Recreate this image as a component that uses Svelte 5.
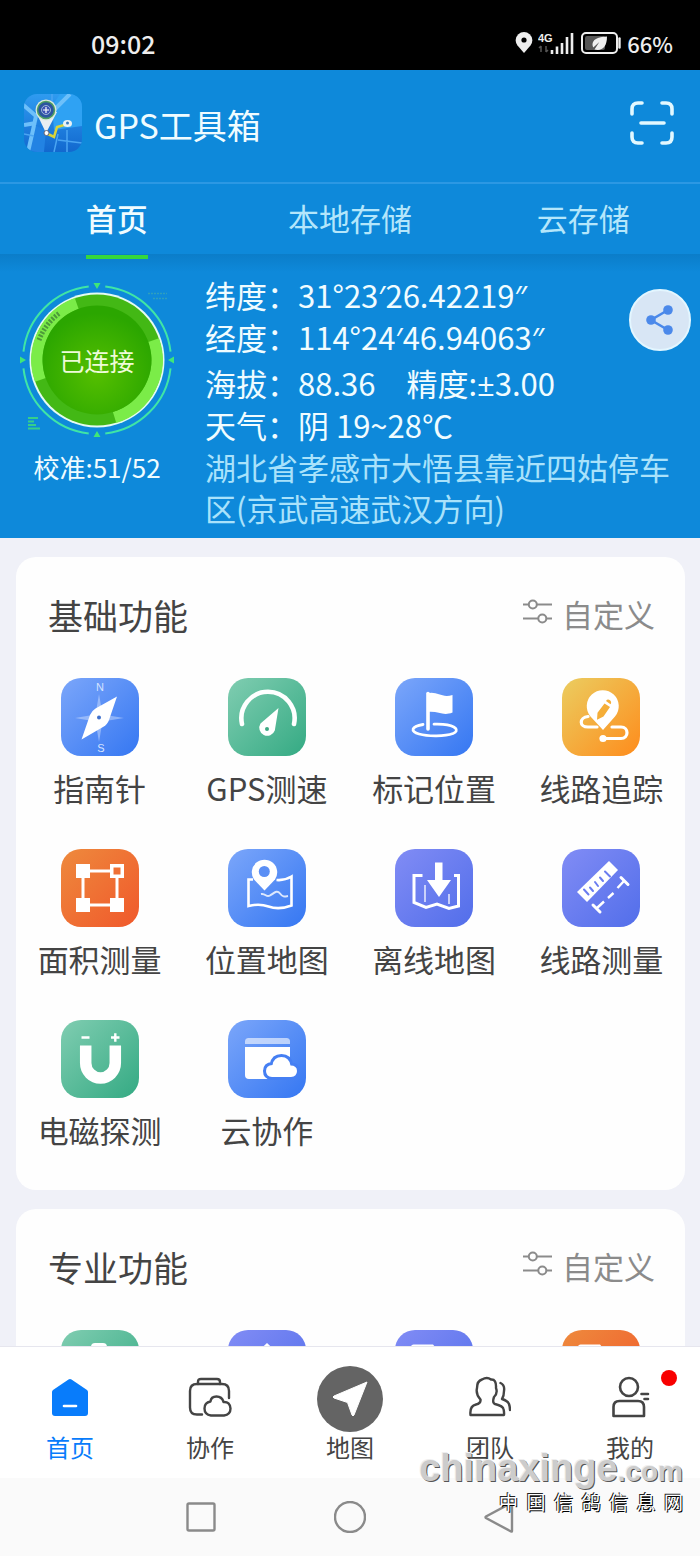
<script lang="ts">
  type Tool = { icon: string; tone: string; label?: string };

  const tabs = ['首页', '本地存储', '云存储'];
  let activeTab = $state('首页');
  let activeNav = $state('首页');

  const basicTools: Tool[] = [
    { icon: 'compass', tone: 'blue', label: '指南针' },
    { icon: 'speed', tone: 'green', label: 'GPS测速' },
    { icon: 'flag', tone: 'blue', label: '标记位置' },
    { icon: 'track', tone: 'yellow', label: '线路追踪' },
    { icon: 'area', tone: 'orange', label: '面积测量' },
    { icon: 'map', tone: 'blue', label: '位置地图' },
    { icon: 'offline', tone: 'purple', label: '离线地图' },
    { icon: 'ruler', tone: 'purple', label: '线路测量' },
    { icon: 'magnet', tone: 'green', label: '电磁探测' },
    { icon: 'cloud', tone: 'blue', label: '云协作' },
  ];

  const proTools: Tool[] = [
    { icon: 'bag', tone: 'green' },
    { icon: 'peak', tone: 'purple' },
    { icon: 'sheet', tone: 'purple' },
    { icon: 'sheet', tone: 'orange' },
  ];

  const navItems = ['首页', '协作', '地图', '团队', '我的'];
</script>

{#snippet toolIcon(name: string)}
  <svg viewBox="0 0 78 78" fill="none" aria-hidden="true">
    {#if name === 'compass'}
      <path d="M38 16l3.500 20.500L63 40l-21.500 3.500L38 64l-3.500-20.500L14 40l20.500-3.500z" fill="#fff" opacity=".35" />
      <path d="M56 18.500L48 42Q46.500 46.500 42 49L20.500 61.500L29 37Q30.500 33 34.500 30.500z" fill="#fff" />
      <circle cx="38" cy="39.500" r="2" fill="#3f70cc" />
      <text x="39" y="13" class="mark">N</text>
      <text x="40" y="74" class="mark">S</text>
    {:else if name === 'speed'}
      <path d="M14 46a26.600 26.600 0 1 1 52 0" stroke="#fff" stroke-width="4.600" stroke-linecap="round" />
      <path d="M50.500 30L46.800 52.500A8 8 0 1 1 32.500 45.500z" fill="#fff" />
      <circle cx="39" cy="51" r="2" fill="#3da983" />
    {:else if name === 'flag'}
      <path d="M33 15.500V51" stroke="#fff" stroke-width="3.600" stroke-linecap="round" />
      <path d="M32 15.500c10-3 14 5 25.500 1.500V34.500c-10 4-14-2-25.500-.5z" fill="#fff" />
      <path d="M28 46.500c-12 2-13 7-4 9.500c9 2.500 26 2.500 34-.5c7-3 3-8-10-9.200c-3-.3-6-.3-9-.2" stroke="#fff" stroke-width="2.800" stroke-linecap="round" />
    {:else if name === 'track'}
      <path d="M26 38.500c-9 1-9 10.500 0 10.500h9" stroke="#fff" stroke-width="3.200" stroke-linecap="round" />
      <path d="M50 49h9c8 0 8 11.500 0 11.500H41" stroke="#fff" stroke-width="3.200" stroke-linecap="round" />
      <circle cx="41" cy="60.500" r="3.600" fill="#fff" />
      <path d="M41 52L28.500 38.500A16 16 0 1 1 53 38.500z" fill="#fff" />
      <path d="M42.500 25.500l5.500 3.600l-6.500 9.400l-6.500 3.200l.5-7zM44 23q1.500-2.500 4-.8q2 1.700.5 4z" fill="#f5ae38" />
    {:else if name === 'area'}
      <path d="M22 22H56V56H22z" stroke="#fff" stroke-width="3" />
      <path d="M15 15h14v14H15zM15 49h14v14H15zM49 49h14v14H49zM49 15h14v14H49z" fill="#fff" />
      <path d="M52.500 18.500h7v7h-7z" fill="#ef7035" />
    {:else if name === 'map'}
      <path d="M25 30.500h-4.500V57c8-2 13-2 20 .5s15 2 23-1V27.500c-5 3-10 4-15 3.500" stroke="#fff" stroke-width="2.600" />
      <path d="M33 45c5-1 5 4 9 1.500s7-6 10-2s5 3 8 2.500" stroke="#fff" stroke-width="2" opacity=".8" />
      <path d="M36.500 41.500L26 30.500A12.700 12.700 0 1 1 47 30.500z" fill="#fff" />
      <circle cx="36.300" cy="22.500" r="5.500" fill="#5b8ff5" />
    {:else if name === 'offline'}
      <path d="M27.500 26.500h-8.500V53.500L31 58.500l11-3.500L54 59.500l9.500-2.500V26.500h-4.500" stroke="#fff" stroke-width="3" />
      <path d="M30 36V53M54 45V55" stroke="#fff" stroke-width="1.600" opacity=".8" />
      <path d="M40 13.500h7.500V31H56L44 48L32 31h8z" fill="#fff" />
    {:else if name === 'ruler'}
      <path d="M47 12L56 21L25 53L15 43z" fill="#fff" />
      <path d="M22 40.500l4.500 5M28 38.500l3 3.500M33 33l3 4M38 28.500l3 3.500M43 22.500l5 5" stroke="#6a7cf0" stroke-width="2" stroke-linecap="round" />
      <path d="M35 59l7-6.500M46 49l5.500-5M55.500 39L62 32" stroke="#fff" stroke-width="2.400" />
      <path d="M31 56l7 7M59 28.500l7 7" stroke="#fff" stroke-width="3" stroke-linecap="round" />
    {:else if name === 'magnet'}
      <path d="M24.700 25.500V43a14.800 15 0 0 0 29.600 0V25.500" stroke="#fff" stroke-width="11.500" />
      <path d="M20.500 17.500h8M50 17.500h8.500M54.300 13.300v8.500" stroke="#fff" stroke-width="2.400" />
    {:else if name === 'cloud'}
      <path d="M17 24v-2.500q0-3.500 3.500-3.500h38q3.500 0 3.500 3.500V24z" fill="#fff" opacity=".6" />
      <path d="M17 27H62V59H21q-4 0-4-4z" fill="#fff" />
      <path d="M44 57q-6-.5-6-6t6.500-6q1.500-8 9-8t9 8.500q6.500 0 6.500 5.500t-6 6z" fill="#fff" stroke="#457ff3" stroke-width="6" />
      <path d="M44 57q-6-.5-6-6t6.500-6q1.500-8 9-8t9 8.500q6.500 0 6.500 5.500t-6 6z" fill="#fff" />
    {:else if name === 'bag'}
      <path d="M30 24v-7q0-4 4-4h8q4 0 4 4v7z" fill="#fff" />
    {:else if name === 'peak'}
      <path d="M39 13L53 26H25z" fill="#fff" />
    {:else if name === 'sheet'}
      <path d="M16 24v-7q0-2.500 2.500-2.500H38L46 24z" fill="#fff" />
    {/if}
  </svg>
{/snippet}

{#snippet section(title: string, tools: Tool[])}
  <section class="card">
    <div class="card-head">
      <h2>{title}</h2>
      <button class="custom">
        <svg width="30" height="26" viewBox="0 0 30 26" fill="none" stroke="#8b8b8b" stroke-width="2" aria-hidden="true">
          <path d="M0 5.500h5.500M14 5.500h15M0 19.500h15M23.500 19.500h5.500" />
          <circle cx="9.800" cy="5.500" r="4" />
          <circle cx="19.300" cy="19.500" r="4" />
        </svg>
        自定义
      </button>
    </div>
    <div class="grid">
      {#each tools as tool}
        <button class="tool">
          <span class="tile {tool.tone}">{@render toolIcon(tool.icon)}</span>
          {#if tool.label}<span class="tool-label">{tool.label}</span>{/if}
        </button>
      {/each}
    </div>
  </section>
{/snippet}

<div class="phone">
  <div class="status">
    <span class="clock">09:02</span>
    <div class="status-right">
      <svg width="18" height="22" viewBox="0 0 18 22" aria-hidden="true">
        <path d="M9 21L2.500 13.500A8.300 8.300 0 1 1 15.500 13.500z" fill="#eee" />
        <circle cx="9" cy="8" r="2.600" fill="#000" />
      </svg>
      <svg width="37" height="24" viewBox="0 0 37 24" aria-hidden="true">
        <text x="0" y="11" class="net">4G</text>
        <path d="M3 15v6M1 17l2-2M8 15v6M8 21l2-2" stroke="#555" stroke-width="1.500" />
        <path d="M14 19v4M19 15.500V23M24 12V23M29 6V23M34 2V23" stroke="#eee" stroke-width="2.600" />
      </svg>
      <svg width="42" height="24" viewBox="0 0 42 24" aria-hidden="true">
        <rect x="2" y="2" width="35" height="20" rx="4" fill="none" stroke="#eee" stroke-width="2" />
        <rect x="5" y="5" width="20" height="14" rx="2" fill="#555" />
        <path d="M39.500 7.500v9" stroke="#eee" stroke-width="2.400" stroke-linecap="round" />
        <path d="M27 5.500C17 6 12.500 9 12.500 13.500q0 1.500.8 3l6-5.500l-4.800 7.500C22 20.500 27 16 27 5.500z" fill="#eee" />
      </svg>
      <span class="percent">66%</span>
    </div>
  </div>

  <header>
    <div class="bar">
      <svg class="logo" viewBox="0 0 58 58" fill="none" aria-hidden="true">
        <defs>
          <clipPath id="logo-clip"><rect width="58" height="58" rx="13" /></clipPath>
          <linearGradient id="logo-bg" x2="0" y2="1">
            <stop offset="0" stop-color="#2f9bf0" />
            <stop offset="1" stop-color="#1268cf" />
          </linearGradient>
        </defs>
        <g clip-path="url(#logo-clip)">
          <rect width="58" height="58" fill="url(#logo-bg)" />
          <path d="M36 0L28 12L30 36L58 32V0z" fill="#2fa2f3" />
          <path d="M10 31L22 36L20 58H6z" fill="#2283e3" />
          <path d="M-2 10L12 22L9 36L4 58M0 31l12-2M46 0L30 16" stroke="#6dc0fa" stroke-width="4" />
          <path d="M28 0v8M34 40L30 58M43 36V58M34 46l24 3M0 40l10 2" stroke="#4aa5f2" stroke-width="1.500" />
          <path d="M24 40l6 3l3-10l11-3" stroke="#d9d43a" stroke-width="2.600" />
          <ellipse cx="43.500" cy="29.500" rx="4.500" ry="3.500" fill="#e8f1f4" />
          <circle cx="43.500" cy="29" r="1.500" fill="#3b7cc0" />
          <path d="M12 18L22 39L33 18z" fill="#e9eef2" />
          <circle cx="22" cy="16" r="10.500" fill="#dbe8dc" />
          <circle cx="22" cy="16" r="8.500" fill="#2c559f" stroke="#4d9f60" stroke-width="1.500" />
          <circle cx="22" cy="16" r="4.500" fill="#3c53b4" stroke="#9db4d8" stroke-width="1" />
          <path d="M22 13v6M19 16h6" stroke="#fff" stroke-width="1.200" />
          <circle cx="22.500" cy="39" r="2.500" fill="#fff" stroke="#667" />
        </g>
      </svg>
      <h1>GPS工具箱</h1>
      <button class="scan" aria-label="扫一扫">
        <svg width="44" height="44" viewBox="0 0 44 44" fill="none" stroke="#e2f8ff" stroke-width="3.600" stroke-linecap="round" aria-hidden="true">
          <path d="M2 13V8q0-6 6-6h4M32 2h4q6 0 6 6v5M42 32v4q0 6-6 6h-4M12 42H8q-6 0-6-6v-4M11 22h23" />
        </svg>
      </button>
    </div>

    <div class="tabs" role="tablist">
      {#each tabs as tab}
        <button role="tab" aria-selected={activeTab === tab} class:active={activeTab === tab} onclick={() => (activeTab = tab)}>
          {tab}
        </button>
      {/each}
    </div>

    <div class="panel">
      <div class="signal">
        <button class="dial">
          <svg viewBox="0 0 160 160" fill="none" aria-hidden="true">
            <defs>
              <radialGradient id="dial-core" cx=".5" cy=".62" r=".55">
                <stop offset="0" stop-color="#55bf00" />
                <stop offset="1" stop-color="#2ba600" />
              </radialGradient>
            </defs>
            <circle cx="80" cy="80" r="74" stroke="#3fe5a6" stroke-width="2" pathLength="360" stroke-dasharray="77 13" stroke-dashoffset="-6.500" />
            <path d="M76.500 3h7L80 9zM76.500 157h7L80 151zM3 76.500v7L9 80zM157 76.500v7L151 80z" fill="#40e678" />
            <circle cx="80" cy="80" r="67.500" fill="#e5fbf2" />
            <circle cx="80" cy="80" r="65.500" fill="#43b815" />
            <path d="M59.700 23.500A60 60 0 0 0 23.400 99.900M136.600 60.100A60 60 0 0 1 97.600 137.400" stroke="#7bec48" stroke-width="11.500" />
            <path d="M22 60A61 61 0 0 1 42.500 33" stroke="#4c9a3a" stroke-width="5" stroke-dasharray="2 1.500" />
            <circle cx="80" cy="80" r="54.500" fill="url(#dial-core)" />
            <path d="M131 13.500h19M136 18.500h14" stroke="#2f9fbd" stroke-width="1.500" stroke-dasharray="2 1" />
            <path d="M11 138h10M11 141.500h6M11 145h8M11 148.500h12" stroke="#35cf8a" stroke-width="2" />
          </svg>
          <span>已连接</span>
        </button>
        <div class="calib">校准:51/52</div>
      </div>
      <div class="info">
        <p>纬度：31°23<i>′</i>26.42219<i>″</i></p>
        <p>经度：114°24<i>′</i>46.94063<i>″</i></p>
        <p class="split">海拔：88.36　精度:<i>±</i>3.00</p>
        <p>天气：阴 19~28℃</p>
        <p class="address">湖北省孝感市大悟县靠近四姑停车区(京武高速武汉方向)</p>
      </div>
      <button class="share" aria-label="分享">
        <svg width="28" height="30" viewBox="0 0 28 30" aria-hidden="true">
          <path d="M22 5L5 15l17 10" fill="none" stroke="#4b89ea" stroke-width="2.600" />
          <circle cx="22" cy="5" r="4.800" fill="#4b89ea" />
          <circle cx="5" cy="15" r="4.800" fill="#4b89ea" />
          <circle cx="22" cy="25" r="4.800" fill="#4b89ea" />
        </svg>
      </button>
    </div>
  </header>

  <main>
    {@render section('基础功能', basicTools)}
    {@render section('专业功能', proTools)}
  </main>

  <nav class="navbar">
    {#each navItems as item}
      <button class:current={activeNav === item} onclick={() => (activeNav = item)}>
        <span class="nav-icon">
          {#if item === '首页'}
            <svg class="glyph" width="38" height="40" viewBox="0 0 38 40" aria-hidden="true">
              <path d="M17.500 2.500Q19 1.500 20.500 2.500L36 13q1 .8 1 2V36q0 3-3 3H4q-3 0-3-3V15q0-1.200 1-2z" fill="#087cfb" />
              <path d="M13 29h12" stroke="#fff" stroke-width="2.600" stroke-linecap="round" />
            </svg>
          {:else if item === '协作'}
            <svg class="glyph" width="44" height="40" viewBox="0 0 44 40" fill="none" stroke="#444" stroke-width="2.400" stroke-linecap="round" stroke-linejoin="round" aria-hidden="true">
              <path d="M10 7V5q0-3 3-3H29q3 0 3 3v2" />
              <path d="M14 37.500H9q-7 0-7-7V14q0-7 7-7H34q7 0 7 7v7" />
              <path d="M23 38.500q-6.500-1-6.500-7t6-7q.5-5 6-5t7 5.500q6.500-.5 7 6.500q0 6-6.500 7z" />
            </svg>
          {:else if item === '地图'}
            <svg width="68" height="68" viewBox="0 0 68 68" aria-hidden="true">
              <circle cx="34" cy="34" r="33" fill="#646464" />
              <path d="M51 17L38 50q-1 2-2 0L31.500 37.500L18 33q-2-1 0-2z" fill="#fff" stroke="#fff" stroke-linejoin="round" />
            </svg>
          {:else if item === '团队'}
            <svg class="glyph" width="42" height="42" viewBox="0 0 42 42" fill="none" stroke="#444" stroke-width="2.400" stroke-linecap="round" stroke-linejoin="round" aria-hidden="true">
              <path d="M8 12Q8 5 13 3.500q5-3 9 0q5.500-.5 5 8.500q2 5-2 9q-2 6 1 7q8 2 8.500 5q.8 3 .5 6H1.500q-1-9 5.500-10.500q5-1 4.500-5Q6.500 18 8 12z" />
              <path d="M31.500 7q4.500 2 3.500 8q0 5-2 8q6 2 7 5q1 3 1 6" />
            </svg>
          {:else}
            <svg class="glyph" width="40" height="42" viewBox="0 0 40 42" fill="none" stroke="#444" stroke-width="2.600" stroke-linecap="round" aria-hidden="true">
              <circle cx="19" cy="11" r="9" />
              <path d="M3.500 40V31q0-6 6-6H28q6 0 6 6v9z" stroke-linejoin="round" />
              <path d="M31.500 18h6.500M34.500 23h3.500" />
            </svg>
            <span class="dot"></span>
          {/if}
        </span>
        {item}
      </button>
    {/each}
  </nav>

  <div class="system">
    <button aria-label="最近任务">
      <svg width="30" height="32" viewBox="0 0 30 32" aria-hidden="true"><rect x="1.500" y="2.500" width="27" height="27" rx="1.500" /></svg>
    </button>
    <button aria-label="主屏幕">
      <svg width="32" height="32" viewBox="0 0 32 32" aria-hidden="true"><circle cx="16" cy="16" r="15" /></svg>
    </button>
    <button aria-label="返回">
      <svg width="30" height="32" viewBox="0 0 30 32" aria-hidden="true"><path d="M28 3v27q0 1-1 .5L2 17q-1-.8 0-1.500L27 2q1-.3 1 1z" /></svg>
    </button>
  </div>

  <div class="watermark">
    <div class="site">chinaxinge<span>.com</span></div>
    <div class="site-cn">中  国  信  鸽  信  息  网</div>
  </div>
</div>

<style>
  :global(body) {
    margin: 0;
    font-family: 'Noto Sans CJK SC', sans-serif;
  }

  button {
    padding: 0;
    border: 0;
    background: none;
    color: inherit;
    font: inherit;
    cursor: pointer;
  }

  svg {
    display: block;
  }

  h1,
  h2,
  p {
    margin: 0;
    font-weight: 400;
  }

  .phone {
    position: relative;
    display: flex;
    flex-direction: column;
    height: 100vh;
    background: #f0f1f8;
    overflow: hidden;
  }

  .status {
    display: flex;
    justify-content: space-between;
    align-items: center;
    height: 54px;
    padding: 16px 27px 0 91px;
    background: #000;
    color: #eee;
  }

  .clock {
    font-size: 25px;
    font-weight: 500;
  }

  .status-right {
    display: flex;
    align-items: center;
    gap: 5px;
  }

  .percent {
    font-size: 22px;
    font-weight: 500;
  }

  .net {
    font: 700 11px 'Liberation Sans', sans-serif;
    fill: #eee;
  }

  header {
    background: #0e89da;
    color: #f0fcff;
  }

  .bar {
    display: flex;
    align-items: center;
    gap: 12px;
    height: 106px;
    padding: 0 26px 6px 24px;
    border-bottom: 2px solid #2c98e3;
  }

  .logo {
    width: 58px;
    height: 58px;
  }

  h1 {
    flex: 1;
    padding-top: 4px;
    font-size: 34px;
    line-height: 48px;
  }

  .tabs {
    display: grid;
    grid-template-columns: repeat(3, 1fr);
    height: 70px;
  }

  .tabs button {
    position: relative;
    padding-bottom: 4px;
    font-size: 31px;
    color: #b4e6fb;
  }

  .tabs .active {
    color: #f0fcff;
    font-weight: 500;
  }

  .tabs .active::after {
    content: '';
    position: absolute;
    left: 50%;
    bottom: -5px;
    z-index: 1;
    width: 62px;
    height: 4px;
    margin-left: -31px;
    background: #35d73d;
  }

  .panel {
    position: relative;
    display: grid;
    grid-template-columns: 194px 1fr;
    gap: 11px;
    padding: 20px 16px 10px 0;
    background: linear-gradient(#0b7dc9, #0e89da 18px);
  }

  .signal {
    display: flex;
    flex-direction: column;
    align-items: center;
    padding-top: 6px;
  }

  .dial {
    display: grid;
    place-items: center;
    width: 160px;
    height: 160px;
    font-size: 25px;
    line-height: 36px;
    color: #eefbd8;
  }

  .dial > * {
    grid-area: 1 / 1;
  }

  .calib {
    margin-top: 9px;
    font-size: 26px;
    line-height: 36px;
  }

  .info {
    font-size: 31px;
    line-height: 42px;
  }

  .info i {
    font-family: 'Open Sans', sans-serif;
    font-style: normal;
    line-height: 1;
  }

  .split {
    margin-top: 4px;
  }

  .address {
    line-height: 41px;
    color: #a9e2fb;
  }

  .share {
    position: absolute;
    top: 35px;
    right: 9px;
    display: grid;
    place-items: center;
    width: 62px;
    height: 62px;
    border: 2px solid #e3f6ff;
    border-radius: 50%;
    background: #d8e6f5;
  }

  main {
    display: flex;
    flex: 1;
    flex-direction: column;
    gap: 19px;
    min-height: 0;
    padding: 19px 15px 0 16px;
    overflow: hidden;
  }

  .card {
    flex-shrink: 0;
    padding-bottom: 38px;
    border-radius: 20px;
    background: #fefefe;
  }

  .card-head {
    display: flex;
    justify-content: space-between;
    align-items: center;
    height: 46px;
    padding: 35px 30px 40px 32px;
  }

  h2 {
    font-size: 35px;
    line-height: 46px;
    color: #444;
  }

  .custom {
    display: flex;
    align-items: center;
    gap: 9px;
    padding-bottom: 2px;
    font-size: 31px;
    line-height: 44px;
    color: #8b8b8b;
  }

  .custom svg {
    margin-bottom: 4px;
  }

  .grid {
    display: grid;
    grid-template-columns: repeat(4, 1fr);
    row-gap: 39px;
  }

  .tool {
    display: flex;
    flex-direction: column;
    align-items: center;
    gap: 10px;
  }

  .tile {
    width: 78px;
    height: 78px;
    border-radius: 20px;
  }

  .tool-label {
    font-size: 31px;
    line-height: 44px;
    color: #444;
    white-space: nowrap;
  }

  .blue {
    background: linear-gradient(135deg, #7ba6fa, #3577f2);
  }

  .green {
    background: linear-gradient(135deg, #80cdb1, #34aa83);
  }

  .yellow {
    background: linear-gradient(135deg, #ebcd60, #fe8c1c);
  }

  .orange {
    background: linear-gradient(135deg, #ee8a3d, #f0582b);
  }

  .purple {
    background: linear-gradient(135deg, #818cf5, #526eea);
  }

  .mark {
    font: 11px 'Liberation Sans', sans-serif;
    fill: #d5e3ff;
    text-anchor: middle;
  }

  .navbar {
    display: grid;
    grid-template-columns: repeat(5, 1fr);
    padding: 18px 0 17px;
    border-top: 1px solid #e6e6ee;
    background: #fff;
  }

  .navbar button {
    display: flex;
    flex-direction: column;
    align-items: center;
    font-size: 24px;
    line-height: 28px;
    color: #444;
  }

  .navbar .current {
    color: #087cfb;
  }

  .nav-icon {
    position: relative;
    display: grid;
    place-items: center;
    width: 68px;
    height: 68px;
  }

  .glyph {
    margin-bottom: 5px;
  }

  .dot {
    position: absolute;
    top: 5px;
    right: -13px;
    width: 16px;
    height: 16px;
    border-radius: 50%;
    background: #f80000;
  }

  .system {
    display: flex;
    justify-content: center;
    align-items: center;
    gap: 118px;
    height: 78px;
    background: #fafafa;
  }

  .system svg {
    fill: none;
    stroke: #8a8a8a;
    stroke-width: 2.400px;
  }

  .watermark {
    position: absolute;
    right: 17px;
    bottom: 44px;
    text-align: right;
    pointer-events: none;
  }

  .site {
    font: 700 38px/40px 'Liberation Sans', Arial, sans-serif;
    color: #ccc;
    text-shadow: -1px -1px 0 #eee, 1px 1px 0 #555;
  }

  .site span {
    font-size: 28px;
  }

  .site-cn {
    font-size: 19px;
    line-height: 20px;
    color: #fff;
    text-shadow: 1px 1px 0 #000, -1px -1px 0 #222;
    white-space: pre;
  }
</style>
